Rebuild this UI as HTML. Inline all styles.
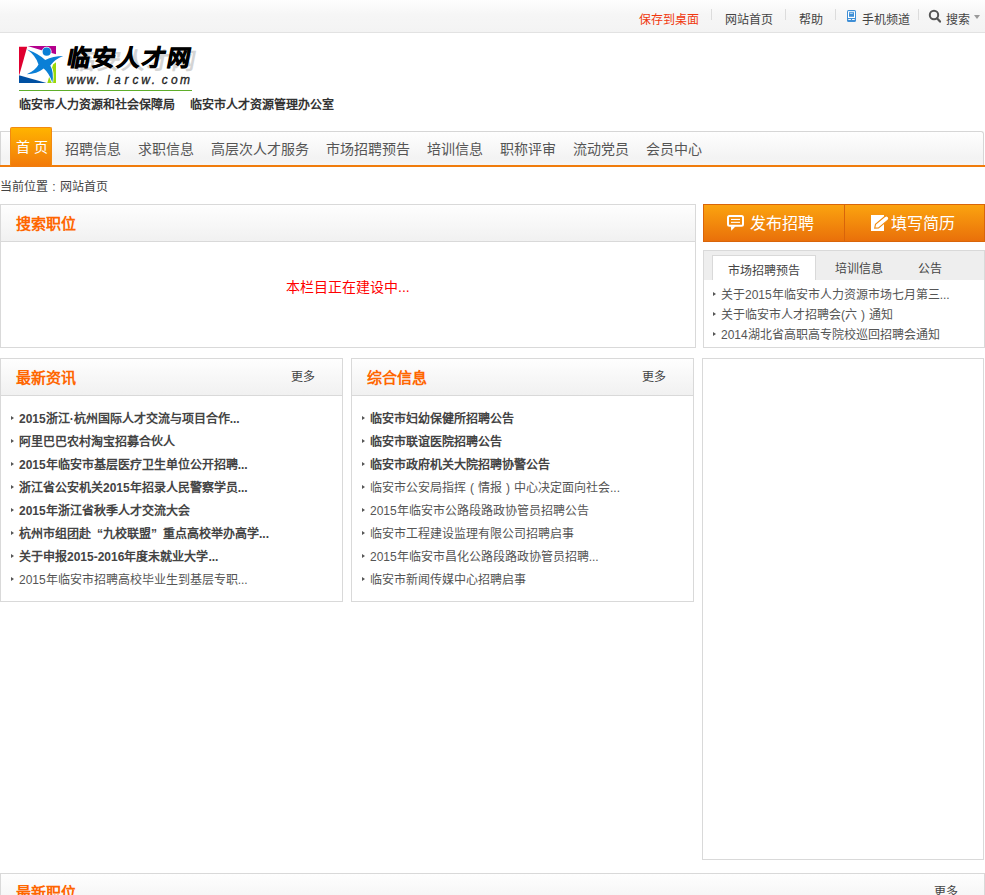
<!DOCTYPE html>
<html lang="zh-CN"><head><meta charset="utf-8">
<style>
*{margin:0;padding:0;box-sizing:border-box}
html,body{width:985px;height:895px;overflow:hidden;background:#fff}
body{font-family:"Liberation Sans",sans-serif;font-size:12px;color:#333;position:relative}
.abs{position:absolute}
#topbar{left:0;top:0;width:985px;height:33px;background:linear-gradient(#fefefe,#f6f6f6 45%,#f3f3f3);border-bottom:1px solid #e2e2e2}
#topbar span{position:absolute;top:13px;line-height:14px;font-size:12px;color:#444;white-space:nowrap}
#topbar .sep{width:1px;height:11px;top:9px;background:#dcdcdc}
#topbar svg{position:absolute}
#nav{left:0;top:131px;width:984px;height:36px;border:1px solid #d6d6d6;border-bottom:none;border-radius:0 3px 0 0;background:linear-gradient(#fefefe,#f3f3f3 75%,#f6f6f6)}
#navline{left:0;top:165px;width:985px;height:2px;background:#f07c0c}
#nav span{position:absolute;top:9px;font-size:14px;line-height:16px;color:#555;white-space:nowrap}
#navact{left:10px;top:127px;width:42px;height:39px;border:1px solid #f28a10;border-bottom:none;border-radius:2px 2px 0 0;background:linear-gradient(#ffb300,#f27a0a)}
#navact span{position:absolute;left:5px;top:11px;font-size:14px;line-height:16px;color:#fff;white-space:nowrap}
.box{position:absolute;border:1px solid #d9d9d9;background:#fff}
.bh{position:absolute;left:0;top:0;right:0;height:37px;background:linear-gradient(#fefefe,#f1f1f1);border-bottom:1px solid #d9d9d9}
.bh b{position:absolute;left:15px;top:10px;font-size:15px;line-height:17px;color:#f60;font-weight:bold;white-space:nowrap}
.bh i{position:absolute;top:11px;font-style:normal;font-size:12px;line-height:14px;color:#444}
ul{list-style:none}
.list li{position:absolute;left:18px;font-size:12px;line-height:14px;color:#555;white-space:nowrap}
.list li:before{content:"";position:absolute;left:-8px;top:4px;border-left:3px solid #555;border-top:2px solid transparent;border-bottom:2px solid transparent}
.tl li{left:17px}
.list li.bd{font-weight:bold;color:#444}
</style></head><body>

<div id="topbar" class="abs">
  <span style="left:639px;color:#f0380f">保存到桌面</span>
  <span class="sep" style="left:711px"></span>
  <span style="left:725px">网站首页</span>
  <span class="sep" style="left:785px"></span>
  <span style="left:799px">帮助</span>
  <span class="sep" style="left:835px"></span>
  <span style="left:862px">手机频道</span>
  <span class="sep" style="left:918px"></span>
  <span style="left:946px">搜索</span>
  <svg style="left:847px;top:10px" width="9" height="12" viewBox="0 0 9 12"><rect x="0" y="0" width="9" height="12" rx="1.6" fill="#3f8fd6"/><rect x="1" y="1.2" width="7" height="6.8" fill="#fff"/><rect x="2" y="2.2" width="5" height="4.6" fill="#3f8fd6"/><rect x="2.8" y="3" width="3" height="0.8" fill="#cfe3f5"/><rect x="1.3" y="9" width="2.6" height="1" fill="#fff"/><rect x="5.1" y="9" width="2.6" height="1" fill="#fff"/></svg>
  <svg style="left:928px;top:9px" width="14" height="15" viewBox="0 0 14 15"><circle cx="6" cy="6" r="4.2" fill="none" stroke="#555" stroke-width="2"/><line x1="9" y1="9.3" x2="12" y2="12.6" stroke="#555" stroke-width="2.2" stroke-linecap="round"/></svg>
  <svg style="left:974px;top:15px" width="6" height="4" viewBox="0 0 6 4"><polygon points="0,0 6,0 3,4" fill="#9a9a9a"/></svg>
</div>


<!-- logo -->
<svg class="abs" style="left:19px;top:46px;overflow:visible" width="37" height="37" viewBox="0 0 37 37">
  <polygon points="0,0.8 8.2,0.8 0.4,28.8 0,28.8" fill="#df0030"/>
  <polygon points="8.6,0 37,0 37,8.2 21,3.8" fill="#b4008c"/>
  <polygon points="0,29.2 27.5,37 0,37" fill="#0050a2"/>
  <polygon points="34,18.5 37,16.3 37,37 28.3,37" fill="#9ad80a"/>
  <path d="M8.2,3.6 Q20,8 26.2,14.1 Q34,10 44.2,10 Q36,13 31.3,19.5 Q35,26 33.4,36.5 Q30,27 24.7,22.6 Q18,28 7.7,28.3 Q17,24 19.5,18.5 Q17,10 8.2,3.6 Z" fill="#0a7fd6" stroke="#fff" stroke-width="1.6" paint-order="stroke"/>
  <circle cx="27.7" cy="5.7" r="4.1" fill="#0a7fd6" stroke="#fff" stroke-width="1.6" paint-order="stroke"/>
</svg>
<div class="abs" style="left:65px;top:45px;font-size:23px;line-height:27px;font-weight:bold;color:#000;-webkit-text-stroke:0.8px #000;text-shadow:5px 3px 0 #d4d4d4;white-space:nowrap;letter-spacing:2px;transform:skewX(-11deg);transform-origin:0 100%">临安人才网</div>
<div class="abs" style="left:0;top:73px;font-size:12px;line-height:15px;font-style:italic;font-weight:normal;color:#222;-webkit-text-stroke:0.3px #222"><span style="position:absolute;left:66.6px">w</span><span style="position:absolute;left:76.5px">w</span><span style="position:absolute;left:86.4px">w</span><span style="position:absolute;left:96.3px">.</span><span style="position:absolute;left:106.9px">l</span><span style="position:absolute;left:113.9px">a</span><span style="position:absolute;left:124.4px">r</span><span style="position:absolute;left:132.6px">c</span><span style="position:absolute;left:141.2px">w</span><span style="position:absolute;left:151.8px">.</span><span style="position:absolute;left:161.7px">c</span><span style="position:absolute;left:170.9px">o</span><span style="position:absolute;left:180.1px">m</span></div>
<div class="abs" style="left:19px;top:90px;width:173px;height:1px;background:#5fae2a"></div>
<div class="abs" style="left:19px;top:98px;font-size:12px;line-height:14px;font-weight:bold;color:#333;white-space:nowrap">临安市人力资源和社会保障局</div><div class="abs" style="left:190px;top:98px;font-size:12px;line-height:14px;font-weight:bold;color:#333;white-space:nowrap">临安市人才资源管理办公室</div>

<div id="nav" class="abs">
  <span style="left:64px">招聘信息</span>
  <span style="left:137px">求职信息</span>
  <span style="left:210px">高层次人才服务</span>
  <span style="left:325px">市场招聘预告</span>
  <span style="left:426px">培训信息</span>
  <span style="left:499px">职称评审</span>
  <span style="left:572px">流动党员</span>
  <span style="left:645px">会员中心</span>
</div>
<div id="navline" class="abs"></div>
<div id="navact" class="abs"><span>首&nbsp;页</span></div>

<div class="abs" style="left:0;top:180px;font-size:12px;line-height:14px;color:#444">当前位置<span style="display:inline-block;width:12px;text-align:center">:</span>网站首页</div>

<!-- search box -->
<div class="box" style="left:0;top:204px;width:696px;height:144px">
  <div class="bh"><b>搜索职位</b></div>
  <div class="abs" style="left:285px;top:74px;font-size:14px;line-height:16px;color:#f00">本栏目正在建设中...</div>
</div>

<!-- news 1 -->
<div class="box" style="left:0;top:358px;width:343px;height:244px">
  <div class="bh"><b>最新资讯</b><i style="left:290px">更多</i></div>
  <ul class="list">
    <li class="bd" style="top:53px">2015浙江·杭州国际人才交流与项目合作...</li>
    <li class="bd" style="top:76px">阿里巴巴农村淘宝招募合伙人</li>
    <li class="bd" style="top:99px">2015年临安市基层医疗卫生单位公开招聘...</li>
    <li class="bd" style="top:122px">浙江省公安机关2015年招录人民警察学员...</li>
    <li class="bd" style="top:145px">2015年浙江省秋季人才交流大会</li>
    <li class="bd" style="top:168px">杭州市组团赴<span style="display:inline-block;width:12px;text-align:right">“</span>九校联盟<span style="display:inline-block;width:12px;text-align:left">”</span>重点高校举办高学...</li>
    <li class="bd" style="top:191px">关于申报2015-2016年度未就业大学...</li>
    <li style="top:214px">2015年临安市招聘高校毕业生到基层专职...</li>
  </ul>
</div>

<!-- news 2 -->
<div class="box" style="left:351px;top:358px;width:343px;height:244px">
  <div class="bh"><b>综合信息</b><i style="left:290px">更多</i></div>
  <ul class="list">
    <li class="bd" style="top:53px">临安市妇幼保健所招聘公告</li>
    <li class="bd" style="top:76px">临安市联谊医院招聘公告</li>
    <li class="bd" style="top:99px">临安市政府机关大院招聘协警公告</li>
    <li style="top:122px">临安市公安局指挥<span style="display:inline-block;width:12px;text-align:center">(</span>情报<span style="display:inline-block;width:12px;text-align:center">)</span>中心决定面向社会...</li>
    <li style="top:145px">2015年临安市公路段路政协管员招聘公告</li>
    <li style="top:168px">临安市工程建设监理有限公司招聘启事</li>
    <li style="top:191px">2015年临安市昌化公路段路政协管员招聘...</li>
    <li style="top:214px">临安市新闻传媒中心招聘启事</li>
  </ul>
</div>

<!-- right buttons -->
<div class="abs" style="left:703px;top:204px;width:282px;height:38px;border:1px solid #d9650a;background:linear-gradient(#fba30f,#e9700a)">
  <div class="abs" style="left:140px;top:0;width:1px;height:36px;background:#d8640a"></div>
  <svg class="abs" style="left:23px;top:10px;overflow:visible" width="18" height="17" viewBox="0 0 18 17"><rect x="1" y="1" width="15" height="9.8" rx="1.5" fill="none" stroke="#fff" stroke-width="2"/><rect x="4" y="3.9" width="9" height="1.1" fill="#fff"/><rect x="4" y="6.8" width="9" height="1.1" fill="#fff"/><polygon points="3.8,11.3 4.3,15.8 8.6,11.3" fill="#fff"/></svg>
  <div class="abs" style="left:46px;top:10px;font-size:16px;line-height:18px;color:#fff">发布招聘</div>
  <svg class="abs" style="left:167px;top:10px;overflow:visible" width="18" height="17" viewBox="0 0 18 17"><rect x="0" y="0" width="13" height="16" fill="#fff"/><g transform="translate(10.3,7.6) rotate(-40)"><path d="M-8.6,0 L-5.6,-2.4 H6.6 A2.4,2.4 0 0 1 6.6,2.4 H-5.6 Z" fill="#fff" stroke="#f08a0c" stroke-width="1.1"/></g></svg>
  <div class="abs" style="left:187px;top:10px;font-size:16px;line-height:18px;color:#fff">填写简历</div>
</div>

<!-- right tab box -->
<div class="box" style="left:703px;top:250px;width:282px;height:98px">
  <div class="abs" style="left:0;top:0;width:280px;height:29px;background:#eee"></div>
  <div class="abs" style="left:8px;top:4px;width:104px;height:25px;background:#fff;border:1px solid #d9d9d9;border-bottom:none"></div>
  <div class="abs" style="left:24px;top:13px;font-size:12px;line-height:14px;color:#444">市场招聘预告</div>
  <div class="abs" style="left:131px;top:11px;font-size:12px;line-height:14px;color:#444">培训信息</div>
  <div class="abs" style="left:214px;top:11px;font-size:12px;line-height:14px;color:#444">公告</div>
  <ul class="list tl">
    <li style="top:37px">关于2015年临安市人力资源市场七月第三...</li>
    <li style="top:57px">关于临安市人才招聘会(六<span style="display:inline-block;width:12px;text-align:center">)</span>通知</li>
    <li style="top:77px">2014湖北省高职高专院校巡回招聘会通知</li>
  </ul>
</div>

<!-- right big box -->
<div class="box" style="left:702px;top:358px;width:282px;height:502px"></div>

<!-- bottom box -->
<div class="box" style="left:0;top:873px;width:985px;height:60px">
  <div class="bh"><b>最新职位</b><i style="left:933px">更多</i></div>
</div>

</body></html>
